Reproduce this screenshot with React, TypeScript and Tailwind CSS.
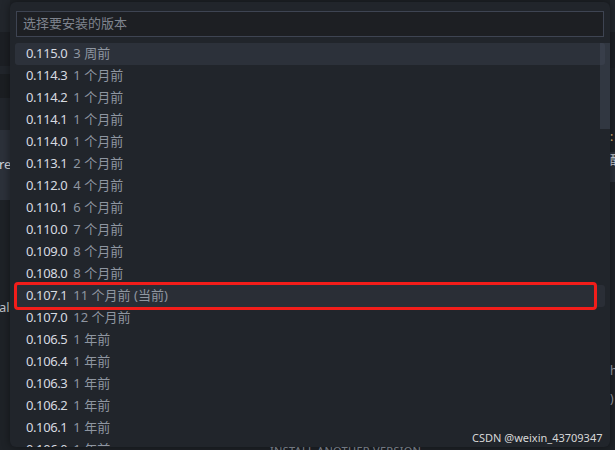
import React from "react";

const versions = [
  { v: "0.115.0", d: "3 周前" },
  { v: "0.114.3", d: "1 个月前" },
  { v: "0.114.2", d: "1 个月前" },
  { v: "0.114.1", d: "1 个月前" },
  { v: "0.114.0", d: "1 个月前" },
  { v: "0.113.1", d: "2 个月前" },
  { v: "0.112.0", d: "4 个月前" },
  { v: "0.110.1", d: "6 个月前" },
  { v: "0.110.0", d: "7 个月前" },
  { v: "0.109.0", d: "8 个月前" },
  { v: "0.108.0", d: "8 个月前" },
  { v: "0.107.1", d: "11 个月前 (当前)" },
  { v: "0.107.0", d: "12 个月前" },
  { v: "0.106.5", d: "1 年前" },
  { v: "0.106.4", d: "1 年前" },
  { v: "0.106.3", d: "1 年前" },
  { v: "0.106.2", d: "1 年前" },
  { v: "0.106.1", d: "1 年前" },
  { v: "0.106.0", d: "1 年前" },
];

const font = {
  fontFamily: '"Segoe UI", "Noto Sans", "Noto Sans CJK SC", sans-serif',
};

function Row({ v, d, index }: { v: string; d: string; index: number }) {
  const active = index === 0;
  const current = index === 11;
  return (
    <div
      className={
        "relative flex h-[22px] shrink-0 items-center gap-[6px] rounded-[3px] pl-[11px] text-[13px] " +
        (active ? "bg-[#2c313a]" : current ? "bg-[#2a2e36]" : "")
      }
    >
      <span className="tracking-[-0.4px] text-[#d7dae0]">{v}</span>
      <span className="text-[#8f96a1]">{d}</span>
      {current && (
        <div className="pointer-events-none absolute -left-[1px] right-[8px] -top-[3px] -bottom-[3px] rounded-[4px] border-[3px] border-[#f21d1a]" />
      )}
    </div>
  );
}

export default function App() {
  return (
    <div
      className="relative h-[450px] w-[615px] overflow-hidden bg-[#1e2227]"
      style={font}
    >
      {/* editor behind the picker */}
      <div className="flex h-full">
        <div className="flex w-[10px] flex-col">
          <div className="h-[32px] bg-[#22262c]" />
          <div className="h-[34px] bg-[#1c1f24]" />
          <div className="h-[8px] bg-[#21252b]" />
          <div className="h-[24px] bg-[#1b1e22]" />
          <div className="h-[32px] bg-[#21252b]" />
          <div className="flex h-[70px] items-center bg-[#2c313a] pb-[1px] text-[13px] text-[#d7dae0]">
            <span className="-ml-[1px]">re</span>
          </div>
          <div className="h-[100px]" />
          <div className="flex h-[16px] items-center text-[13px] text-[#c0c4cc]">
            <span className="-ml-[1px]">all</span>
          </div>
          <div className="flex-1" />
        </div>
        <div className="flex-1" />
        <div className="flex w-[5px] flex-col text-[12px] text-[#9aa0aa]">
          <div className="h-[32px] bg-[#22262c]" />
          <div className="h-[36px] bg-[#1c1f24]" />
          <div className="h-[60px]" />
          <div className="h-[24px] text-[#e5c07b]">:</div>
          <div className="h-[30px] bg-[#2c313a] text-[#d7dae0]">酯</div>
          <div className="h-[180px]" />
          <div className="h-[28px]">h</div>
          <div className="h-[28px]">)</div>
        </div>
      </div>

      <div className="absolute bottom-0 left-[270px] translate-y-[9px] text-[11px] tracking-wide text-[#8f96a1]">
        INSTALL ANOTHER VERSION
      </div>

      {/* version picker */}
      <div className="absolute left-[10px] top-[2px] flex h-[445px] w-[600px] flex-col overflow-hidden rounded-[6px] bg-[#21252b] shadow-[0_0_8px_rgba(0,0,0,0.45)]">
        <div className="px-[6px] pt-[9px]">
          <div className="flex h-[26px] items-center border border-[#3e4452] bg-[#1d1f23] pl-[6px] text-[13px] text-[#7f848e]">
            选择要安装的版本
          </div>
        </div>
        <div className="relative mt-[6px] flex min-h-0 flex-1 flex-col pl-[5px] pr-[5px]">
          {versions.map((r, i) => (
            <Row key={r.v} v={r.v} d={r.d} index={i} />
          ))}
          <div className="absolute right-0 top-0 h-[86px] w-[10px] bg-[#4b5263]/40" />
        </div>
      </div>

      <div className="absolute left-[472px] top-[430px] text-[11px] text-[#d8d8d8]">
        CSDN @weixin_43709347
      </div>
    </div>
  );
}
